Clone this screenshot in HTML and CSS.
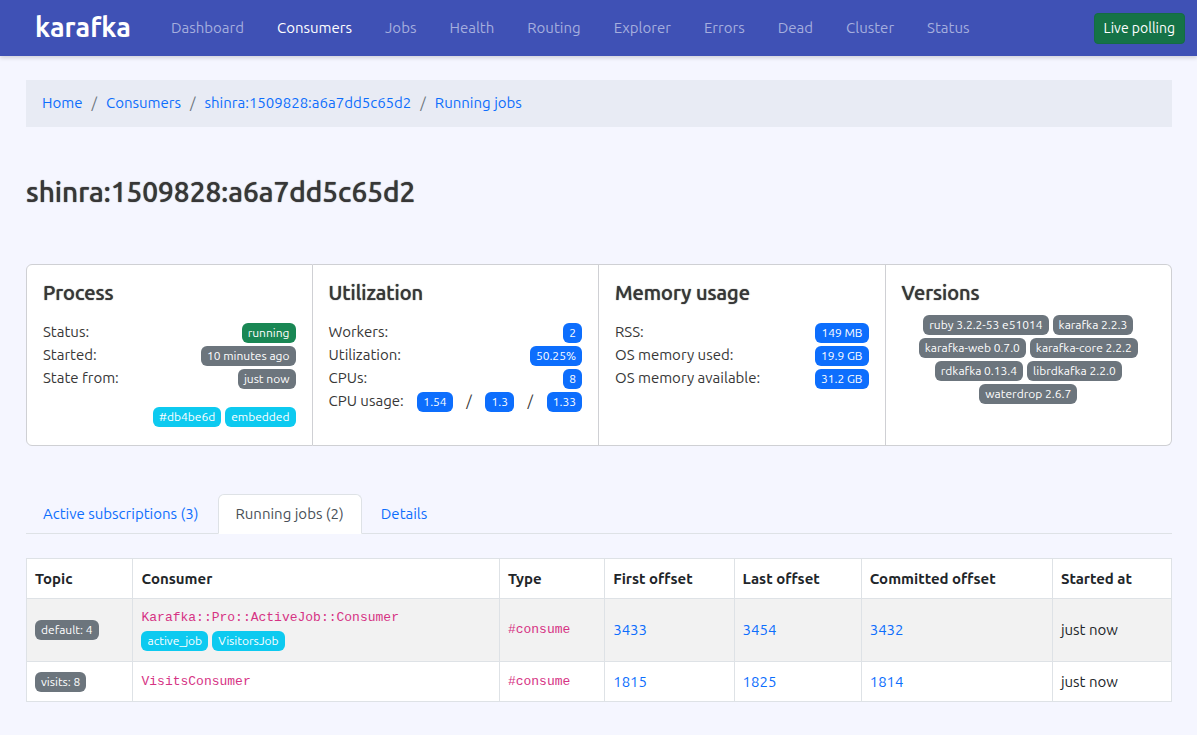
FILE: index.html
```html
<!DOCTYPE html>
<html lang="en">
<head>
<meta charset="utf-8">
<meta name="viewport" content="width=device-width, initial-scale=1">
<title>Karafka – Running jobs</title>
<link rel="stylesheet" href="styles.css">
</head>
<body>
<header class="navbar">
  <a class="brand" href="#">karafka</a>
  <nav class="nav" aria-label="Main">
    <a href="#">Dashboard</a>
    <a class="active" href="#" aria-current="page">Consumers</a>
    <a href="#">Jobs</a>
    <a href="#">Health</a>
    <a href="#">Routing</a>
    <a href="#">Explorer</a>
    <a href="#">Errors</a>
    <a href="#">Dead</a>
    <a href="#">Cluster</a>
    <a href="#">Status</a>
  </nav>
  <button class="polling" type="button">Live polling</button>
</header>

<main class="content">
  <nav class="breadcrumb" aria-label="Breadcrumb">
    <a href="#">Home</a>
    <span>/</span>
    <a href="#">Consumers</a>
    <span>/</span>
    <a href="#">shinra:1509828:a6a7dd5c65d2</a>
    <span>/</span>
    <a href="#">Running jobs</a>
  </nav>

  <h1 class="title">shinra:1509828:a6a7dd5c65d2</h1>

  <div class="cards">
    <section class="card">
      <h2>Process</h2>
      <div class="row"><span>Status:</span><span class="badge success">running</span></div>
      <div class="row"><span>Started:</span><span class="badge">10 minutes ago</span></div>
      <div class="row"><span>State from:</span><span class="badge">just now</span></div>
      <div class="tags"><span class="badge info">#db4be6d</span><span class="badge info">embedded</span></div>
    </section>
    <section class="card">
      <h2>Utilization</h2>
      <div class="row"><span>Workers:</span><span class="badge primary">2</span></div>
      <div class="row"><span>Utilization:</span><span class="badge primary">50.25%</span></div>
      <div class="row"><span>CPUs:</span><span class="badge primary">8</span></div>
      <div class="row"><span>CPU usage:</span><span class="badge primary">1.54</span><span>/</span><span class="badge primary">1.3</span><span>/</span><span class="badge primary">1.33</span></div>
    </section>
    <section class="card">
      <h2>Memory usage</h2>
      <div class="row"><span>RSS:</span><span class="badge primary">149 MB</span></div>
      <div class="row"><span>OS memory used:</span><span class="badge primary">19.9 GB</span></div>
      <div class="row"><span>OS memory available:</span><span class="badge primary">31.2 GB</span></div>
    </section>
    <section class="card">
      <h2>Versions</h2>
      <div class="versions">
        <span class="badge">ruby 3.2.2-53 e51014</span>
        <span class="badge">karafka 2.2.3</span>
        <span class="badge">karafka-web 0.7.0</span>
        <span class="badge">karafka-core 2.2.2</span>
        <span class="badge">rdkafka 0.13.4</span>
        <span class="badge">librdkafka 2.2.0</span>
        <span class="badge">waterdrop 2.6.7</span>
      </div>
    </section>
  </div>

  <nav class="tabs" aria-label="Process sections">
    <a href="#">Active subscriptions (3)</a>
    <a class="active" href="#" aria-current="page">Running jobs (2)</a>
    <a href="#">Details</a>
  </nav>

  <table class="jobs">
    <colgroup>
      <col class="c-topic"><col class="c-consumer"><col class="c-type"><col class="c-first"><col class="c-last"><col class="c-committed"><col class="c-started">
    </colgroup>
    <thead>
      <tr><th>Topic</th><th>Consumer</th><th>Type</th><th>First offset</th><th>Last offset</th><th>Committed offset</th><th>Started at</th></tr>
    </thead>
    <tbody>
      <tr>
        <td><span class="badge">default: 4</span></td>
        <td>
          <code>Karafka::Pro::ActiveJob::Consumer</code>
          <div class="job-tags"><span class="badge info">active_job</span><span class="badge info">VisitorsJob</span></div>
        </td>
        <td><code>#consume</code></td>
        <td><a href="#">3433</a></td>
        <td><a href="#">3454</a></td>
        <td><a href="#">3432</a></td>
        <td>just now</td>
      </tr>
      <tr>
        <td><span class="badge">visits: 8</span></td>
        <td><code>VisitsConsumer</code></td>
        <td><code>#consume</code></td>
        <td><a href="#">1815</a></td>
        <td><a href="#">1825</a></td>
        <td><a href="#">1814</a></td>
        <td>just now</td>
      </tr>
    </tbody>
  </table>
</main>
</body>
</html>
```
FILE: styles.css
```css
* { box-sizing: border-box; }
body {
  margin: 0;
  background: #f5f6ff;
  color: #373737;
  font: 15px/22px Ubuntu, "Noto Sans", sans-serif;
}
a { color: #0d6efd; text-decoration: none; }

.navbar {
  display: flex;
  align-items: center;
  min-height: 56px;
  padding: 0 12px 0 35px;
  background: #3f51b5;
  box-shadow: 0 2px 4px rgba(0, 0, 0, 0.15);
}
.brand {
  margin-right: 40px;
  padding-bottom: 2px;
  color: #fff;
  font: bold 27px/32px Ubuntu, "Noto Sans", sans-serif;
}
.nav { display: flex; flex: 1; gap: 33px; }
.nav a { color: #a5aede; }
.nav .active { color: #fff; }
.polling {
  height: 31px;
  padding: 0 9px;
  border: 1px solid #146c43;
  border-radius: 4px;
  background: #157347;
  color: #fff;
  font: 14px/21px Ubuntu, "Noto Sans", sans-serif;
}

.content { padding: 24px 25px 32px 26px; }

.breadcrumb {
  display: flex;
  flex-wrap: wrap;
  gap: 8px;
  padding: 12px 16px 13px;
  background: #e8ebf4;
}
.breadcrumb span { padding: 0 1px; color: #6c757d; }

.title {
  margin: 48px 0 56px;
  font-size: 28px;
  line-height: 33px;
  font-weight: 500;
  text-shadow: 0 0 1px #373737;
}

.cards {
  display: grid;
  grid-template-columns: repeat(4, 1fr);
}
.card {
  min-height: 182px;
  padding: 16px;
  border: 1px solid #cfd0d4;
  border-left-width: 0;
  background: #fff;
}
.card:first-child {
  border-left-width: 1px;
  border-radius: 6px 0 0 6px;
}
.card:last-child { border-radius: 0 6px 6px 0; }
.card h2 {
  margin: 0 0 16px;
  font-size: 20px;
  line-height: 24px;
  font-weight: 500;
  text-shadow: 0 0 1px #373737;
}
.row {
  display: flex;
  align-items: flex-end;
  justify-content: space-between;
  padding-bottom: 1px;
}
.badge {
  display: inline-block;
  padding: 4px 6px;
  border-radius: 6px;
  background: #6c757d;
  color: #fff;
  font-size: 12px;
  line-height: 12px;
  text-align: center;
  white-space: nowrap;
  vertical-align: middle;
}
.success { background: #198754; }
.primary { background: #0d6efd; }
.info { background: #0dcaf0; }
.tags {
  display: flex;
  justify-content: flex-end;
  gap: 4px;
  margin-top: 17px;
}
.versions {
  display: flex;
  flex-wrap: wrap;
  justify-content: center;
  gap: 3px 4px;
  margin: -6px 16px 0;
}

.tabs {
  display: flex;
  gap: 2px;
  margin: 48px 0 24px;
  border-bottom: 1px solid #dee2e6;
}
.tabs a {
  margin-bottom: -1px;
  padding: 8px 17px 8px 16px;
  border: 1px solid transparent;
  border-radius: 6px 6px 0 0;
}
.tabs .active {
  border-color: #dee2e6 #dee2e6 #fff;
  background: #fff;
  color: #495057;
}

.jobs {
  width: 100%;
  table-layout: fixed;
  border-collapse: collapse;
  background: #fff;
  color: #212529;
}
.jobs th, .jobs td {
  height: 40px;
  padding: 8px;
  border: 1px solid #dee2e6;
  text-align: left;
  vertical-align: middle;
}
.jobs th { font-weight: bold; }
.jobs tbody tr:nth-child(odd) { background: #f2f2f2; }
.jobs code {
  display: block;
  color: #d63384;
  font-family: "Liberation Mono", monospace;
  font-size: 13px;
}
.jobs .badge { display: block; width: fit-content; }
.job-tags { display: flex; gap: 4px; padding: 2px 0; }
.c-topic { width: 9.3%; }
.c-consumer { width: 32%; }
.c-type { width: 9.2%; }
.c-first { width: 11.3%; }
.c-last { width: 11.1%; }
.c-committed { width: 16.7%; }
.c-started { width: 10.4%; }
```
